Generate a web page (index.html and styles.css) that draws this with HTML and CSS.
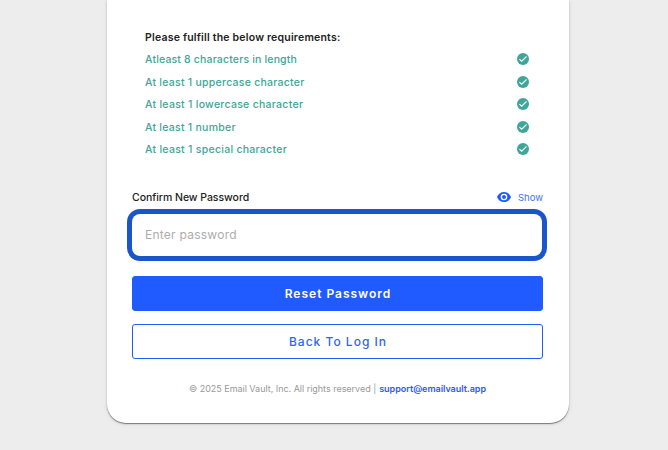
FILE: index.html
```html
<!DOCTYPE html>
<html lang="en">
<head>
<meta charset="utf-8">
<title>Reset Password</title>
<link rel="stylesheet" href="styles.css">
</head>
<body>
<svg class="defs" aria-hidden="true">
  <symbol id="check" viewBox="0 0 12 12"><circle cx="6" cy="6" r="6" fill="#3da698"/><path d="M2.400 6.100 4.700 8.200 9.500 3.500" fill="none" stroke="#fff" stroke-width="1.100"/></symbol>
</svg>
<main class="card">
  <section class="requirements">
    <h2 class="req-title"><span>Please fulfill the below requirements:</span></h2>
    <ul class="req-list">
      <li class="req"><span class="req-text r1">Atleast 8 characters in length</span><svg class="check"><use href="#check"/></svg></li>
      <li class="req"><span class="req-text">At least 1 uppercase character</span><svg class="check"><use href="#check"/></svg></li>
      <li class="req"><span class="req-text r3">At least 1 lowercase character</span><svg class="check"><use href="#check"/></svg></li>
      <li class="req"><span class="req-text">At least 1 number</span><svg class="check"><use href="#check"/></svg></li>
      <li class="req"><span class="req-text r3">At least 1 special character</span><svg class="check"><use href="#check"/></svg></li>
    </ul>
  </section>
  <div class="field-head">
    <label class="label" for="confirm">Confirm New Password</label>
    <button class="show" type="button">
      <svg class="eye" viewBox="0 0 14 10"><path fill="#1f5bff" fill-rule="evenodd" d="M7 0C3.8 0 1.1 2 0 5c1.1 3 3.8 5 7 5s5.9-2 7-5C12.900 2 10.200 0 7 0Zm0 8.300a3.300 3.300 0 1 1 0-6.600 3.300 3.300 0 0 1 0 6.600Zm0-1.300a2 2 0 1 0 0-4 2 2 0 0 0 0 4Z"/></svg>
      <span>Show</span>
    </button>
  </div>
  <input class="input" id="confirm" type="password" placeholder="Enter password">
  <button class="btn primary" type="button"><span>Reset Password</span></button>
  <button class="btn secondary" type="button"><span>Back To Log In</span></button>
  <footer class="footer"><span class="copy">© 2025 Email Vault, Inc. All rights reserved |</span><a class="mail">support@emailvault.app</a></footer>
</main>
</body>
</html>
```

FILE: styles.css
```css
* { box-sizing: border-box; }
body {
  margin: 0;
  height: 450px;
  overflow: hidden;
  background: #ededed;
  font-family: "Inter", "Liberation Sans", sans-serif;
}
.defs { display: none; }
.card {
  width: 462px;
  height: 422.5px;
  margin-left: 107px;
  padding: 26px 26px 0 25px;
  background: #fff;
  border-radius: 0 0 19px 19px;
  box-shadow: 0 1px 1px rgba(0, 0, 0, .45), 0 1px 4px rgba(0, 0, 0, .12);
  white-space: nowrap;
}
.requirements { padding: 0 13px; height: 160px; }
.req-title {
  margin: 0;
  height: 22px;
  font-size: 10.5px;
  line-height: 23px;
  font-weight: 600;
  letter-spacing: .2px;
  color: #222;
}
.req-list { margin: 0; padding: 0; list-style: none; }
.req {
  display: flex;
  align-items: center;
  justify-content: space-between;
  height: 22.5px;
  font-size: 10.5px;
  font-weight: 500;
  letter-spacing: .26px;
  color: #3da698;
}
.req-text { padding-top: .6px; }
.r1 { letter-spacing: .17px; }
.r3 { letter-spacing: .28px; }
.check { width: 12px; height: 12px; margin-right: 1px; }
.field-head {
  display: flex;
  align-items: center;
  justify-content: space-between;
  height: 22px;
}
.label { font-size: 10.5px; font-weight: 500; color: #222; letter-spacing: -.04px; }
.show {
  display: flex;
  align-items: center;
  gap: 7px;
  padding: 0;
  border: 0;
  background: none;
  font: 400 9.5px "Inter", sans-serif;
  color: #3d70fa;
}
.eye { width: 14px; height: 10px; }
.input {
  display: block;
  width: 410px;
  height: 42px;
  margin: 6px 0 20px;
  padding: 0 13px 2px;
  border: 0;
  border-radius: 8px;
  outline: 0;
  background: #fff;
  box-shadow: 0 0 0 5px #1b55cc;
  font: 400 12px "Inter", sans-serif;
  letter-spacing: .25px;
}
.input::placeholder { color: #adadad; opacity: 1; }
.btn {
  display: block;
  width: 411px;
  height: 35px;
  padding: 0 0 0 1px;
  border: 1px solid #1f5bff;
  border-radius: 3px;
  font: 600 12px "Inter", sans-serif;
  letter-spacing: 1px;
}
.primary { background: #1f5bff; color: #fff; margin-bottom: 13px; }
.secondary { background: #fff; color: #2f65f5; font-weight: 500; }
.footer {
  display: flex;
  justify-content: center;
  gap: 3px;
  margin-top: 24px;
  font-size: 9px;
  line-height: 12px;
  letter-spacing: -.02px;
  color: #999;
}
.mail { color: #1f5bff; font-weight: 600; }
```
